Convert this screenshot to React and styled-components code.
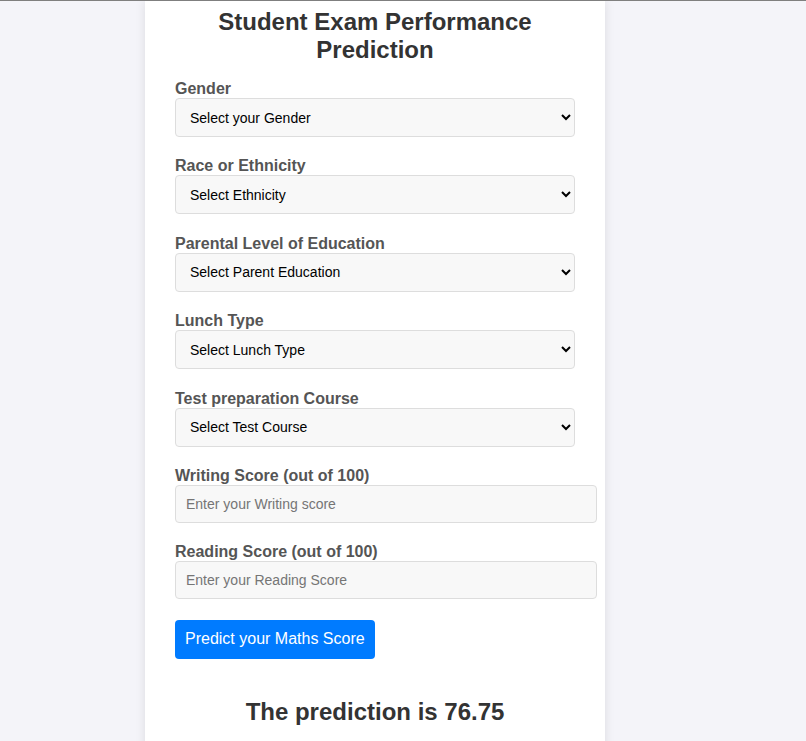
import React from "react";
import styled, { createGlobalStyle } from "styled-components";

const GlobalStyle = createGlobalStyle`
  html, body {
    margin: 0;
    padding: 0;
    background: #f4f4f9;
  }
  body {
    border-top: 1px solid #7f7f7f;
    font-family: "Liberation Sans", Arial, sans-serif;
    color: #333;
  }
`;

const Page = styled.div`
  width: 750px;
  display: flex;
  justify-content: center;
`;

const Card = styled.div`
  width: 400px;
  padding: 7px 30px 30px;
  background: #fff;
  box-shadow: 0 0 10px rgba(0, 0, 0, 0.1);
  min-height: 740px;
`;

const Title = styled.h1`
  margin: 0 0 16px;
  font-size: 24px;
  font-weight: bold;
  text-align: center;
  color: #333;
`;

const Group = styled.div`
  margin-bottom: 20.4px;
`;

const Label = styled.label`
  display: block;
  font-size: 16px;
  font-weight: bold;
  color: #555;
`;

const Select = styled.select`
  display: block;
  width: 100%;
  height: 39px;
  padding: 0 6px 0 10px;
  font-family: "Liberation Sans", Arial, sans-serif;
  font-size: 14px;
  color: #000;
  background: #f8f8f8;
  border: 1px solid #ddd;
  border-radius: 4px;
`;

const Input = styled.input`
  display: block;
  width: 400px;
  padding: 10px;
  height: 16px;
  font-family: "Liberation Sans", Arial, sans-serif;
  font-size: 14px;
  background: #f8f8f8;
  border: 1px solid #ddd;
  border-radius: 4px;
  &::placeholder {
    color: #757575;
  }
`;

const Button = styled.button`
  padding: 10px;
  height: 39px;
  font-family: "Liberation Sans", Arial, sans-serif;
  font-size: 16px;
  color: #fff;
  background: #007bff;
  border: none;
  border-radius: 4px;
  cursor: pointer;
`;

const Result = styled.h2`
  margin: 39px 0 0;
  font-size: 24px;
  font-weight: bold;
  text-align: center;
  color: #333;
`;

const selects = [
  ["Gender", "Select your Gender"],
  ["Race or Ethnicity", "Select Ethnicity"],
  ["Parental Level of Education", "Select Parent Education"],
  ["Lunch Type", "Select Lunch Type"],
  ["Test preparation Course", "Select Test Course"]
];

const inputs = [
  ["Writing Score (out of 100)", "Enter your Writing score"],
  ["Reading Score (out of 100)", "Enter your Reading Score"]
];

export default function App() {
  return (
    <>
      <GlobalStyle />
      <Page>
        <Card>
          <Title>Student Exam Performance Prediction</Title>
          <form onSubmit={e => e.preventDefault()}>
            {selects.map(([label, placeholder]) => (
              <Group key={label}>
                <Label>{label}</Label>
                <Select defaultValue="">
                  <option value="" disabled>
                    {placeholder}
                  </option>
                </Select>
              </Group>
            ))}
            {inputs.map(([label, placeholder]) => (
              <Group key={label}>
                <Label>{label}</Label>
                <Input type="number" placeholder={placeholder} />
              </Group>
            ))}
            <Button type="submit">Predict your Maths Score</Button>
          </form>
          <Result>The prediction is 76.75</Result>
        </Card>
      </Page>
    </>
  );
}
